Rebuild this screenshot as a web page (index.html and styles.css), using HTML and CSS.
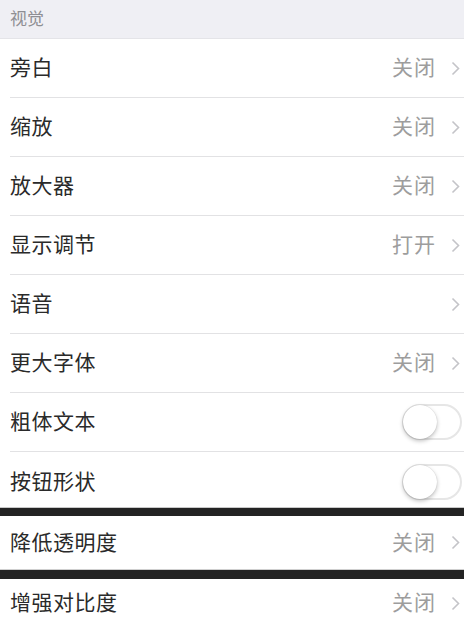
FILE: index.html
```html
<!DOCTYPE html>
<html lang="zh-CN">
<head>
<meta charset="utf-8">
<link rel="stylesheet" href="styles.css">
</head>
<body>
<div class="page">
  <div class="section-header">视觉</div>
  <div class="list">
    <div class="row"><span class="label">旁白</span><span class="value">关闭</span><svg class="chev" viewBox="0 0 9 15"><path d="M1.5 1.5 L7.5 7.5 L1.5 13.5"/></svg></div>
    <div class="row"><span class="label">缩放</span><span class="value">关闭</span><svg class="chev" viewBox="0 0 9 15"><path d="M1.5 1.5 L7.5 7.5 L1.5 13.5"/></svg></div>
    <div class="row"><span class="label">放大器</span><span class="value">关闭</span><svg class="chev" viewBox="0 0 9 15"><path d="M1.5 1.5 L7.5 7.5 L1.5 13.5"/></svg></div>
    <div class="row"><span class="label">显示调节</span><span class="value">打开</span><svg class="chev" viewBox="0 0 9 15"><path d="M1.5 1.5 L7.5 7.5 L1.5 13.5"/></svg></div>
    <div class="row"><span class="label">语音</span><span class="value"></span><svg class="chev" viewBox="0 0 9 15"><path d="M1.5 1.5 L7.5 7.5 L1.5 13.5"/></svg></div>
    <div class="row"><span class="label">更大字体</span><span class="value">关闭</span><svg class="chev" viewBox="0 0 9 15"><path d="M1.5 1.5 L7.5 7.5 L1.5 13.5"/></svg></div>
    <div class="row"><span class="label">粗体文本</span><span class="toggle"><span class="knob"></span></span></div>
    <div class="row row-short"><span class="label">按钮形状</span><span class="toggle"><span class="knob"></span></span></div>
  </div>
  <div class="bar"></div>
  <div class="list">
    <div class="row row-mid"><span class="label">降低透明度</span><span class="value">关闭</span><svg class="chev" viewBox="0 0 9 15"><path d="M1.5 1.5 L7.5 7.5 L1.5 13.5"/></svg></div>
  </div>
  <div class="bar bar-thick"></div>
  <div class="list">
    <div class="row row-last"><span class="label">增强对比度</span><span class="value">关闭</span><svg class="chev" viewBox="0 0 9 15"><path d="M1.5 1.5 L7.5 7.5 L1.5 13.5"/></svg></div>
  </div>
</div>
</body>
</html>
```
FILE: styles.css
```css
html, body {
  margin: 0;
  padding: 0;
  background: #ffffff;
}
body {
  font-family: "Noto Sans CJK SC", "Noto Sans", sans-serif;
  width: 464px;
  height: 626px;
  overflow: hidden;
}
.page {
  display: flex;
  flex-direction: column;
}
.section-header {
  height: 39px;
  box-sizing: border-box;
  background: #efeff4;
  color: #8e8e93;
  font-size: 17px;
  padding-left: 10px;
  display: flex;
  align-items: center;
  padding-bottom: 4px;
  border-bottom: 1px solid #e4e4e8;
}
.list {
  display: flex;
  flex-direction: column;
  background: #fff;
}
.row {
  height: 59px;
  box-sizing: border-box;
  display: flex;
  align-items: center;
  margin-left: 10px;
  padding-right: 3px;
  border-bottom: 1px solid #e2e2e4;
}
.row-short {
  height: 56px;
  border-bottom: 1px solid #c8c8c8;
  margin-left: 0;
  padding-left: 10px;
  padding-top: 4px;
}
.row-mid {
  height: 54px;
  border-bottom: 1px solid #cfcfcf;
  margin-left: 0;
  padding-left: 10px;
}
.row-last {
  height: 48px;
  border-bottom: none;
}
.label {
  flex: 1;
  font-size: 21px;
  color: #2a2a2a;
  letter-spacing: 0.5px;
  position: relative;
  top: -2px;
}
.value {
  font-size: 21px;
  color: #9d9d9d;
  margin-right: 15px;
  letter-spacing: 1px;
  position: relative;
  top: -2px;
}
.chev {
  width: 9px;
  height: 15px;
  margin-right: 1px;
  fill: none;
  stroke: #c4c4c8;
  stroke-width: 1.6;
}
.toggle {
  width: 60px;
  height: 36px;
  box-sizing: border-box;
  border: 2px solid #e6e6e6;
  border-radius: 18px;
  position: relative;
  margin-right: -1px;
  background: #fff;
}
.knob {
  position: absolute;
  left: -1px;
  top: -1px;
  width: 34px;
  height: 34px;
  border-radius: 50%;
  background: #fff;
  box-shadow: 0 2px 4px rgba(0,0,0,0.25), 0 0 1px rgba(0,0,0,0.2);
}
.bar {
  height: 8px;
  background: #232323;
}
.bar-thick {
  height: 9px;
}
```
